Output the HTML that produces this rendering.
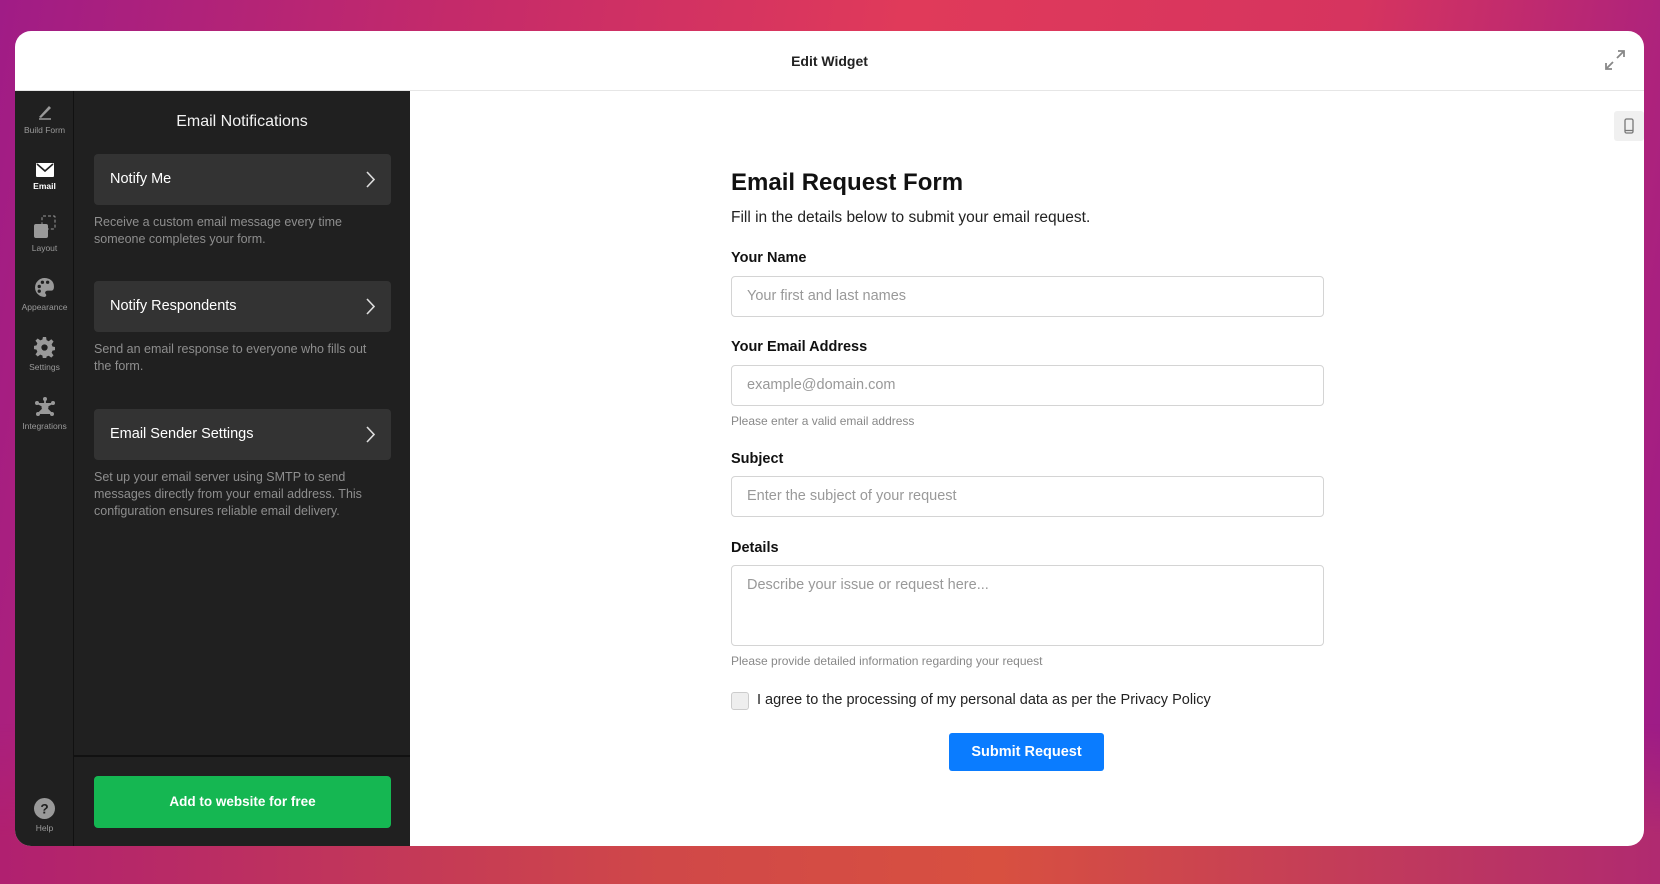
<!DOCTYPE html>
<html><head><meta charset="utf-8"><style>
*{box-sizing:border-box;margin:0;padding:0}
body{width:1660px;height:884px;overflow:hidden;font-family:"Liberation Sans",sans-serif;
background:linear-gradient(100deg,#a01c86 0%,#c42a6a 25%,#e03a5a 50%,#d6345f 75%,#9a1a8a 100%);position:relative}
.bot{position:absolute;left:0;right:0;bottom:0;height:160px;background:linear-gradient(90deg,#b02070,#d04848 40%,#d85040 60%,#b02a70);-webkit-mask-image:linear-gradient(to bottom,transparent,#000 70%);mask-image:linear-gradient(to bottom,transparent,#000 70%)}
.win{position:absolute;left:15px;top:31px;width:1629px;height:815px;background:#fff;border-radius:16px;overflow:hidden}
.hdr{position:absolute;left:0;top:0;right:0;height:60px;border-bottom:1px solid #e6e6e6;text-align:center;line-height:60px;font-size:14px;font-weight:bold;color:#222}
.rail{position:absolute;left:0;top:60px;width:59px;bottom:0;background:#202020;border-right:1px solid #111}
.ri{position:absolute;left:0;width:59px;text-align:center;font-size:8.5px;color:#9a9a9a}
.ri svg{display:block;margin:0 auto 4px}
.panel{position:absolute;left:59px;top:60px;width:336px;bottom:0;background:#202020}
.pt{position:absolute;top:22px;width:100%;text-align:center;color:#f2f2f2;font-size:16px}
.card{position:absolute;left:20px;width:297px;height:51px;background:#333;border-radius:4px;color:#fff;font-size:14.5px;padding-left:16px;line-height:51px}
.card svg{position:absolute;right:16px;top:17px}
.desc{position:absolute;left:20px;width:290px;color:#8e8e8e;font-size:12.5px;line-height:17px}
.foot{position:absolute;left:0;right:0;bottom:0;height:91px;border-top:2px solid #111}
.green{position:absolute;left:20px;top:19px;width:297px;height:52px;background:#15b752;border-radius:4px;color:#fff;font-weight:bold;font-size:13.5px;text-align:center;line-height:52px}
.main{position:absolute;left:716px;top:0;width:600px}
h1{position:absolute;top:138px;font-size:24px;font-weight:bold;color:#111;white-space:nowrap}
.abs{position:absolute;white-space:nowrap}
.lbl{font-size:14.5px;font-weight:bold;color:#111}
.inp{position:absolute;left:0;width:593px;border:1px solid #d4d4d4;border-radius:4px;color:#999;font-size:14.5px;padding-left:15px}
.help{font-size:12px;color:#888}
</style></head><body>
<div class="bot"></div>
<div class="win">
<div class="hdr">Edit Widget</div>
<svg style="position:absolute;left:1589px;top:18px" width="22" height="22" viewBox="0 0 22 22" fill="none" stroke="#888" stroke-width="1.8"><path d="M13 9l7-7M14 2h6v6M9 13l-7 7M2 14v6h6"/></svg>
<div style="position:absolute;left:1599px;top:80px;width:30px;height:30px;background:#f0f0f0;border-radius:3px"><svg style="margin:7px 0 0 10px" width="10" height="16" viewBox="0 0 10 16" fill="none" stroke="#777" stroke-width="1.3"><rect x="1" y="1" width="8" height="14" rx="1.5"/><path d="M1 12.5h8"/></svg></div>
<div class="rail">
 <div class="ri" style="top:12px"><svg width="18" height="18" viewBox="0 0 18 18"><path d="M3 14L13 3l2 2L5 15z" fill="#999"/><path d="M3 16h12" stroke="#999" stroke-width="1.5"/></svg>Build Form</div>
 <div class="ri" style="top:72px;color:#fff;font-weight:bold"><svg width="18" height="14" viewBox="0 0 18 14"><rect x="0" y="0" width="18" height="14" rx="1" fill="#fff"/><path d="M1 1l8 7 8-7" stroke="#202020" stroke-width="1.6" fill="none"/></svg>Email</div>
 <div class="ri" style="top:124px"><svg width="24" height="24" viewBox="0 0 24 24"><rect x="1" y="9" width="14" height="14" rx="2" fill="#999"/><rect x="9" y="1" width="13" height="13" rx="1" fill="none" stroke="#999" stroke-dasharray="3 2"/></svg>Layout</div>
 <div class="ri" style="top:186px"><svg width="21" height="21" viewBox="0 0 20 20"><path d="M10 1a9 9 0 100 18c2 0 2-2 1-3s0-3 2-3h3c2 0 3-1 3-4 0-5-4-8-9-8z" fill="#999"/><circle cx="5" cy="9" r="1.6" fill="#202020"/><circle cx="8" cy="5" r="1.6" fill="#202020"/><circle cx="13" cy="5" r="1.6" fill="#202020"/><circle cx="5" cy="13.5" r="1.6" fill="#202020"/></svg>Appearance</div>
 <div class="ri" style="top:246px"><svg width="21" height="21" viewBox="0 0 20 20"><path d="M8.5 0h3l.5 3 2 1 2.5-1.8 2.1 2.1L16.8 7l.8 2 2.4.5v3l-2.4.5-.8 2 1.8 2.5-2.1 2.1-2.5-1.8-2 .8-.5 2.4h-3L8 17.6l-2-.8-2.5 1.8-2.1-2.1L3.2 14l-.8-2L0 11.5v-3L2.4 8l.8-2L1.4 3.5l2.1-2.1L6 3.2 8 2.4z" fill="#999"/><circle cx="10" cy="10" r="3" fill="#202020"/></svg>Settings</div>
 <div class="ri" style="top:306px"><svg width="22" height="20" viewBox="0 0 22 20" fill="#999"><circle cx="11" cy="10" r="3.5"/><circle cx="11" cy="2" r="2"/><circle cx="3" cy="6" r="2"/><circle cx="19" cy="6" r="2"/><circle cx="4" cy="17" r="2"/><circle cx="18" cy="17" r="2"/><path d="M11 2v8M3 6l8 4 8-4M4 17l7-7 7 7" stroke="#999" stroke-width="1.8"/></svg>Integrations</div>
 <div class="ri" style="top:707px"><svg width="21" height="21" viewBox="0 0 20 20"><circle cx="10" cy="10" r="10" fill="#999"/><text x="10" y="15" text-anchor="middle" font-family="Liberation Sans" font-weight="bold" font-size="13" fill="#202020">?</text></svg>Help</div>
</div>
<div class="panel">
 <div class="pt">Email Notifications</div>
 <div class="card" style="top:63px">Notify Me<svg width="10" height="17" viewBox="0 0 10 17" fill="none" stroke="#ddd" stroke-width="1.6"><path d="M2 1l7 7.5L2 16"/></svg></div>
 <div class="desc" style="top:123px">Receive a custom email message every time someone completes your form.</div>
 <div class="card" style="top:190px">Notify Respondents<svg width="10" height="17" viewBox="0 0 10 17" fill="none" stroke="#ddd" stroke-width="1.6"><path d="M2 1l7 7.5L2 16"/></svg></div>
 <div class="desc" style="top:250px">Send an email response to everyone who fills out the form.</div>
 <div class="card" style="top:318px">Email Sender Settings<svg width="10" height="17" viewBox="0 0 10 17" fill="none" stroke="#ddd" stroke-width="1.6"><path d="M2 1l7 7.5L2 16"/></svg></div>
 <div class="desc" style="top:378px">Set up your email server using SMTP to send messages directly from your email address. This configuration ensures reliable email delivery.</div>
 <div class="foot"><div class="green">Add to website for free</div></div>
</div>
<div class="main">
 <h1>Email Request Form</h1>
 <div class="abs" style="top:178px;font-size:15.5px;color:#222">Fill in the details below to submit your email request.</div>
 <div class="abs lbl" style="top:219px">Your Name</div>
 <div class="inp" style="top:245px;height:41px;line-height:39px">Your first and last names</div>
 <div class="abs lbl" style="top:308px">Your Email Address</div>
 <div class="inp" style="top:334px;height:41px;line-height:39px">example@domain.com</div>
 <div class="abs help" style="top:383px">Please enter a valid email address</div>
 <div class="abs lbl" style="top:420px">Subject</div>
 <div class="inp" style="top:445px;height:41px;line-height:39px">Enter the subject of your request</div>
 <div class="abs lbl" style="top:509px">Details</div>
 <div class="inp" style="top:534px;height:81px;line-height:20px;padding-top:9px">Describe your issue or request here...</div>
 <div class="abs help" style="top:623px">Please provide detailed information regarding your request</div>
 <div style="position:absolute;top:661px;left:0;width:18px;height:18px;border:1px solid #ccc;border-radius:3px;background:#eee"></div>
 <div class="abs" style="top:661px;left:26px;font-size:14.5px;color:#222">I agree to the processing of my personal data as per the Privacy Policy</div>
 <div style="position:absolute;top:702px;left:218px;width:155px;height:38px;background:#0a7cff;border-radius:3px;color:#fff;font-weight:bold;font-size:14.5px;text-align:center;line-height:38px">Submit Request</div>
</div>
</div>
</body></html>
